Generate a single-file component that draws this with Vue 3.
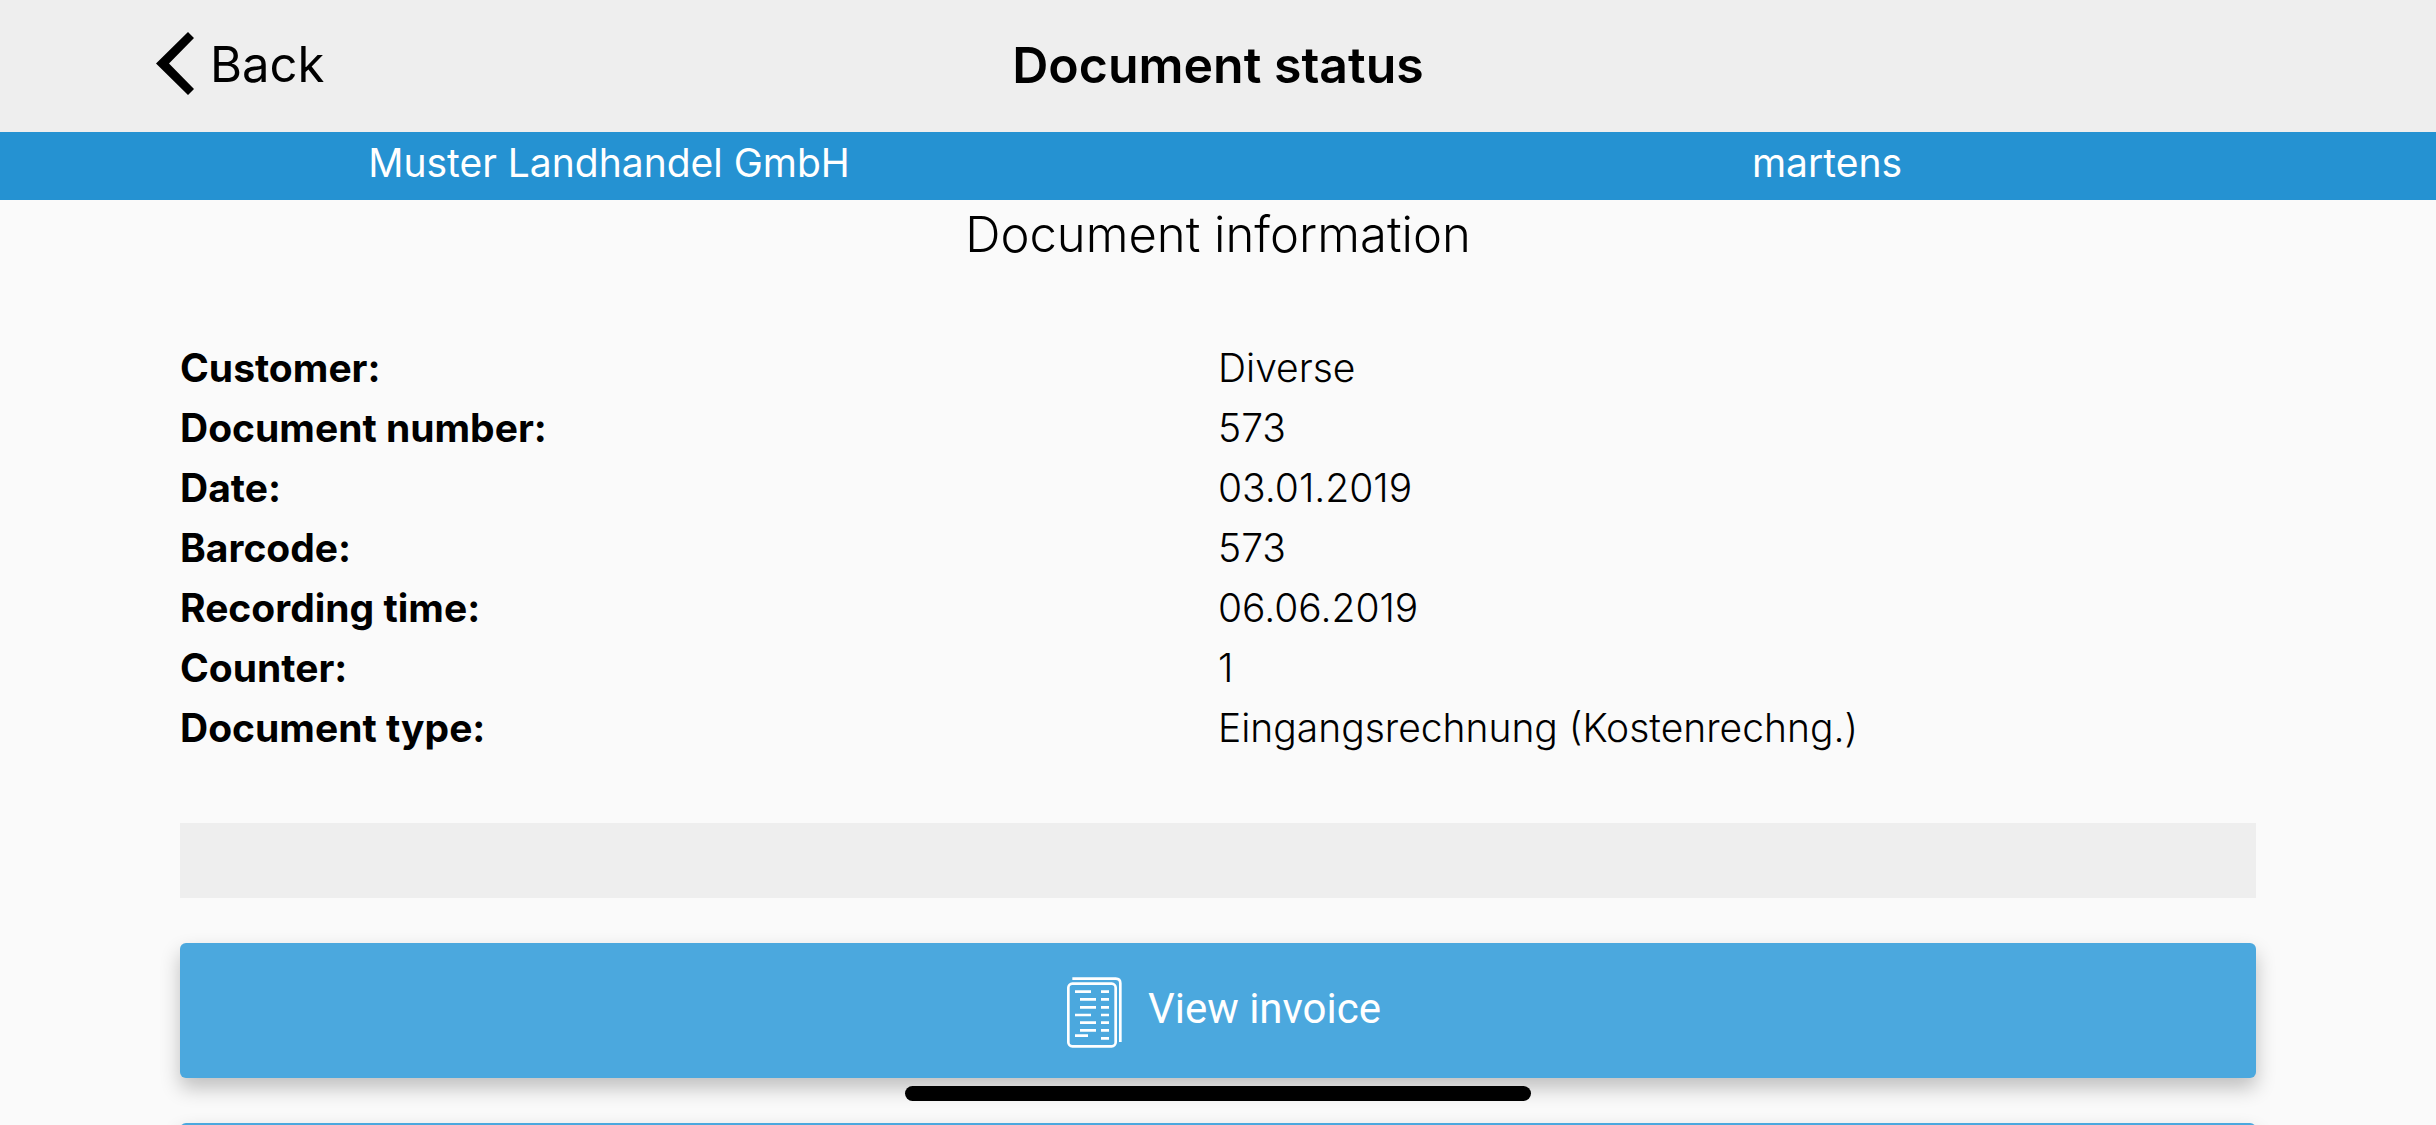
<script setup>
const account = { company: 'Muster Landhandel GmbH', user: 'martens' }

const fields = [
  { label: 'Customer:', value: 'Diverse' },
  { label: 'Document number:', value: '573' },
  { label: 'Date:', value: '03.01.2019' },
  { label: 'Barcode:', value: '573' },
  { label: 'Recording time:', value: '06.06.2019' },
  { label: 'Counter:', value: '1' },
  { label: 'Document type:', value: 'Eingangsrechnung (Kostenrechng.)' },
]
</script>

<template>
  <div class="screen">
    <header class="toolbar">
      <button type="button" class="back">
        <svg class="chevron" viewBox="0 0 76 126" aria-hidden="true">
          <path d="M64 0 76 12 26 63 76 114 64 126 0 63Z" />
        </svg>
        <span>Back</span>
      </button>
      <h1 class="title">Document status</h1>
    </header>

    <div class="account">
      <span>{{ account.company }}</span>
      <span>{{ account.user }}</span>
    </div>

    <main class="content">
      <h2 class="heading">Document information</h2>

      <dl class="fields">
        <div v-for="field in fields" :key="field.label" class="field">
          <dt>{{ field.label }}</dt>
          <dd>{{ field.value }}</dd>
        </div>
      </dl>

      <div class="divider"></div>

      <div class="actions">
        <button type="button" class="action">
          <svg class="invoice" viewBox="0 0 165 213" aria-hidden="true">
            <path d="M16 5H146Q160 5 160 19V195" />
            <rect x="4" y="20" width="142" height="188" rx="12" />
            <path
              d="M24 44H72M39 67H87M39 91H87M24 114H72M39 137H87M39 160H87M24 176H63M102 44H126M102 67H126M102 91H126M102 114H126M102 137H126M102 160H126M102 184H126"
            />
          </svg>
          <span class="action-label">View invoice</span>
        </button>
        <button type="button" class="action" aria-label="More"></button>
      </div>
    </main>

    <div class="home-indicator"></div>
  </div>
</template>

<style>
body {
  overflow: hidden;
  background: #fafafa;
}
</style>

<style scoped>
.screen {
  position: relative;
  height: 100vh;
  overflow: hidden;
  background: #fafafa;
  color: #000;
  font-family: Inter, "Liberation Sans", sans-serif;
  font-size: 39px;
  line-height: 60px;
}

.toolbar {
  box-sizing: border-box;
  display: grid;
  grid-template-columns: 1fr auto 1fr;
  align-items: center;
  height: 132px;
  padding: 0 156px 2px;
  background: #eee;
}

.back {
  display: flex;
  align-items: center;
  justify-self: start;
  gap: 16px;
  padding: 0;
  border: 0;
  background: none;
  color: inherit;
  font: inherit;
  font-size: 49px;
}

.chevron {
  width: 38px;
  height: 63px;
  margin-bottom: 4px;
}

.title,
.heading {
  margin: 0;
  text-align: center;
}

.title {
  font-size: 50px;
  font-weight: 600;
}

.account {
  display: grid;
  grid-template-columns: 1fr 1fr;
  padding: 1px 0 7px;
  background: #2592d2;
  color: #fff;
  text-align: center;
}

.content {
  padding: 5px 180px 0;
}

.heading {
  font-size: 49px;
  font-weight: 300;
}

.fields {
  margin: 73px 0 0;
}

.field {
  display: grid;
  grid-template-columns: 1fr 1fr;
}

.field dt {
  font-weight: 700;
}

.field dd {
  margin: 0;
  font-weight: 300;
}

.divider {
  height: 75px;
  margin: 65px 0 45px;
  background: #eee;
}

.actions {
  display: flex;
  flex-direction: column;
  gap: 45px;
}

.action {
  display: flex;
  align-items: center;
  justify-content: center;
  gap: 26px;
  height: 135px;
  padding: 0 0 0 12px;
  border: 0;
  border-radius: 6px;
  background: #4ba8de;
  box-shadow: 0 10px 20px rgba(0, 0, 0, 0.24);
  color: #fff;
  font: 42px/60px Roboto, sans-serif;
}

.invoice {
  width: 55px;
  height: 71px;
  margin-top: 3px;
  fill: none;
  stroke: currentColor;
  stroke-width: 8;
}

.action-label {
  padding-bottom: 3px;
}

.home-indicator {
  position: absolute;
  bottom: 24px;
  left: 50%;
  width: 626px;
  height: 15px;
  border-radius: 8px;
  background: #000;
  transform: translateX(-50%);
}
</style>
